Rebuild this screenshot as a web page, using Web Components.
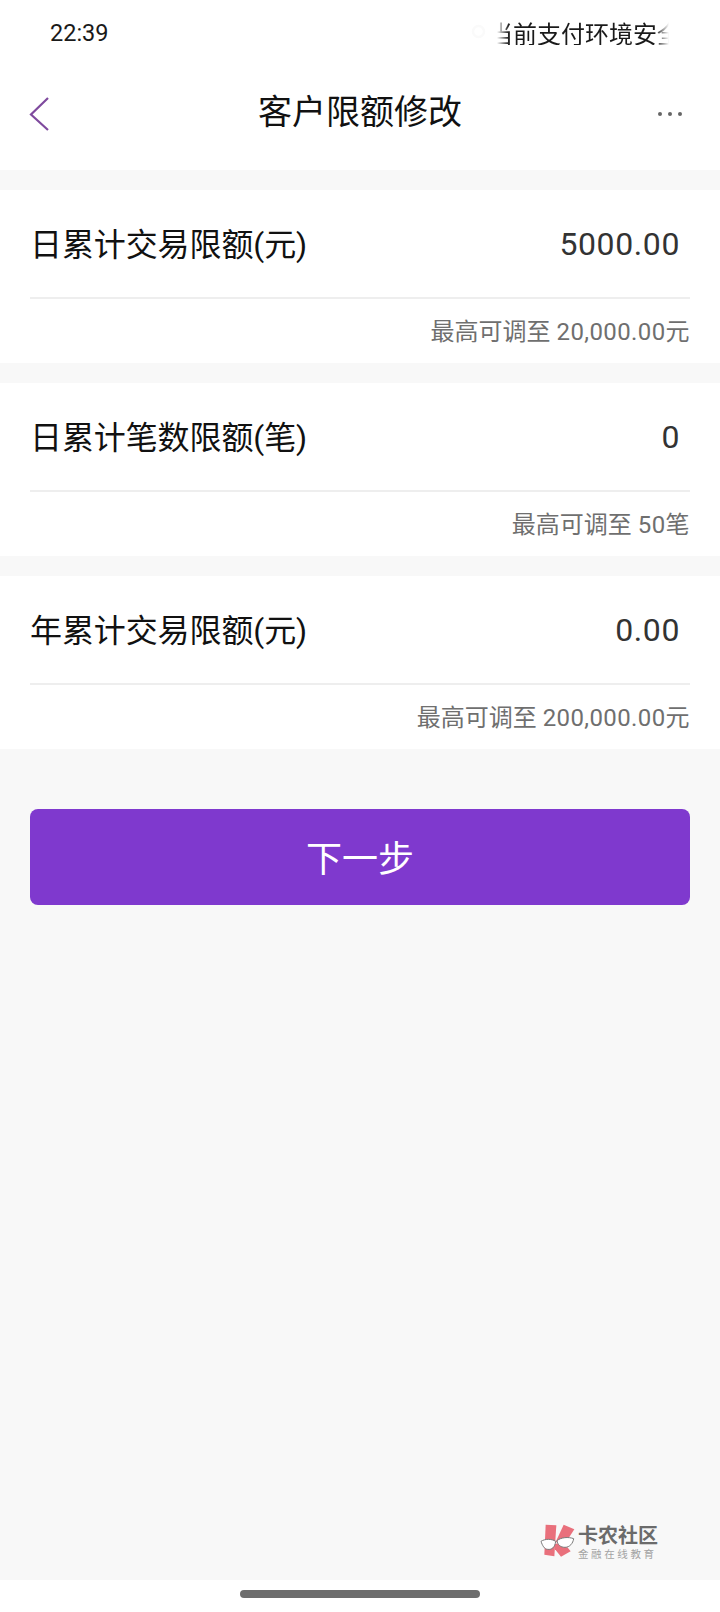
<!DOCTYPE html>
<html lang="zh">
<head>
<meta charset="utf-8">
<title>客户限额修改</title>
<style>
  html, body {
    margin: 0;
    padding: 0;
    height: 1612px;
    background: #f8f8f8;
    font-family: Roboto, "Noto Sans CJK SC", sans-serif;
  }
  body {
    display: flex;
    flex-direction: column;
    overflow: hidden;
  }
</style>
</head>
<body>
  <status-bar time="22:39" notice="当前支付环境安全"></status-bar>
  <nav-header title-text="客户限额修改"></nav-header>
  <limit-card label="日累计交易限额(元)" value="5000.00" hint="最高可调至" cap="20,000.00元"></limit-card>
  <limit-card label="日累计笔数限额(笔)" value="0" hint="最高可调至" cap="50笔"></limit-card>
  <limit-card label="年累计交易限额(元)" value="0.00" hint="最高可调至" cap="200,000.00元"></limit-card>
  <primary-button>下一步</primary-button>
  <brand-mark></brand-mark>
  <home-indicator></home-indicator>

<script>
class StatusBar extends HTMLElement {
  connectedCallback() {
    this.attachShadow({ mode: 'open' });
    this.shadowRoot.innerHTML = `
      <style>
        :host {
          display: flex;
          align-items: center;
          justify-content: space-between;
          height: 66px;
          background: #fff;
          padding: 0 39px 0 50px;
          color: #1a1a1a;
        }
        .time {
          margin-top: 1px;
          font: 400 23.5px/1 Roboto, sans-serif;
        }
        .right {
          display: flex;
          align-items: center;
          gap: 3px;
        }
        .notice {
          margin-top: -1px;
          width: 192px;
          white-space: nowrap;
          font: 400 24px/1 "Noto Sans CJK SC", sans-serif;
          -webkit-mask-image: linear-gradient(to right, transparent 8px, #000 20px, #000 166px, transparent 180px);
          mask-image: linear-gradient(to right, transparent 8px, #000 20px, #000 166px, transparent 180px);
        }
        svg { display: block; margin-top: -4px; }
      </style>
      <span class="time">${this.getAttribute('time')}</span>
      <div class="right">
        <svg width="15" height="15" viewBox="0 0 15 15">
          <circle cx="7.5" cy="7.5" r="5.5" fill="none" stroke="#fafafa" stroke-width="2.5"/>
        </svg>
        <span class="notice">${this.getAttribute('notice')}</span>
      </div>
    `;
  }
}

class NavHeader extends HTMLElement {
  connectedCallback() {
    this.attachShadow({ mode: 'open' });
    this.shadowRoot.innerHTML = `
      <style>
        :host {
          display: grid;
          grid-template-columns: 100px 1fr 100px;
          align-items: center;
          height: 104px;
          margin-bottom: 20px;
          background: #fff;
          padding-bottom: 12px;
          box-sizing: border-box;
        }
        svg { display: block; }
        .back { margin: 4px 0 0 28px; }
        h1 {
          margin: -4px 0 0;
          text-align: center;
          font: 400 34px/1 "Noto Sans CJK SC", sans-serif;
          color: #111;
        }
        .more {
          justify-self: end;
          margin: 4px 38px 0 0;
          display: flex;
          gap: 6px;
        }
        .more i {
          width: 4px;
          height: 4px;
          border-radius: 50%;
          background: #666;
        }
      </style>
      <svg class="back" width="24" height="36" viewBox="0 0 24 36">
        <path d="M20 2 L3 18.5 L20 34" fill="none" stroke="#7f4a9e" stroke-width="2.2"/>
      </svg>
      <h1>${this.getAttribute('title-text')}</h1>
      <div class="more"><i></i><i></i><i></i></div>
    `;
  }
}

class LimitCard extends HTMLElement {
  connectedCallback() {
    this.attachShadow({ mode: 'open' });
    this.shadowRoot.innerHTML = `
      <style>
        :host {
          display: block;
          background: #fff;
          margin-bottom: 20px;
          padding: 0 30px;
        }
        :host(:last-of-type) { margin-bottom: 0; }
        .row {
          display: flex;
          align-items: center;
          justify-content: space-between;
          height: 105px;
          padding-top: 2px;
          border-bottom: 2px solid #eeeeee;
          padding-right: 10px;
        }
        .label {
          font: 400 32px/1 Roboto, "Noto Sans CJK SC", sans-serif;
          letter-spacing: -0.1px;
          color: #111;
        }
        .value {
          margin-top: -2px;
          font: 400 32px/1 Roboto, sans-serif;
          letter-spacing: 0.6px;
          color: #333;
        }
        .hint {
          display: flex;
          align-items: center;
          justify-content: flex-end;
          gap: 6px;
          height: 64px;
          box-sizing: border-box;
          padding-top: 2px;
          font: 400 24px/1 Roboto, "Noto Sans CJK SC", sans-serif;
          color: #6f6f6f;
        }
        .cap { letter-spacing: 0.4px; }
      </style>
      <div class="row">
        <span class="label">${this.getAttribute('label')}</span>
        <span class="value">${this.getAttribute('value')}</span>
      </div>
      <div class="hint">
        <span>${this.getAttribute('hint')}</span>
        <span class="cap">${this.getAttribute('cap')}</span>
      </div>
    `;
  }
}

class PrimaryButton extends HTMLElement {
  connectedCallback() {
    this.attachShadow({ mode: 'open' });
    this.shadowRoot.innerHTML = `
      <style>
        :host {
          display: block;
          padding: 60px 30px 0;
        }
        button {
          display: block;
          width: 100%;
          height: 96px;
          padding: 0 0 2px;
          border: none;
          border-radius: 8px;
          background: #7f39ce;
          color: #fff;
          font: 400 36px/1 "Noto Sans CJK SC", sans-serif;
        }
      </style>
      <button><slot></slot></button>
    `;
  }
}

class BrandMark extends HTMLElement {
  connectedCallback() {
    this.attachShadow({ mode: 'open' });
    this.shadowRoot.innerHTML = `
      <style>
        :host {
          display: flex;
          flex: 1;
          align-items: flex-end;
          justify-content: flex-end;
          padding: 0 62px 16px 0;
        }
        svg { display: block; }
        .words {
          display: flex;
          flex-direction: column;
          gap: 3px;
          margin-bottom: 5px;
        }
        .name {
          font: 700 20px/20px "Noto Sans CJK SC", sans-serif;
          color: #6b6b6b;
        }
        .sub {
          font: 400 10.5px/11px "Noto Sans CJK SC", sans-serif;
          letter-spacing: 2.6px;
          color: #a3a3a3;
          white-space: nowrap;
        }
      </style>
      <svg width="43" height="46" viewBox="0 0 129 138">
        <path d="M32 20 L64 22 L58 115 L28 110 Z" fill="#e9707c"/>
        <path d="M86 20 L118 34 L88 80 L62 72 Z" fill="#e9707c"/>
        <path d="M60 78 L84 72 L107 100 L78 116 L60 94 Z" fill="#e9707c"/>
        <path d="M18 70 C30 62 50 62 62 70 C60 88 50 96 38 94 C28 94 22 82 18 70 Z" fill="#fff" stroke="#7a7a7a" stroke-width="3"/>
        <path d="M66 68 C78 58 100 56 116 62 C114 76 104 88 90 88 C76 88 68 80 66 68 Z" fill="#fff" stroke="#7a7a7a" stroke-width="3"/>
      </svg>
      <div class="words">
        <span class="name">卡农社区</span>
        <span class="sub">金融在线教育</span>
      </div>
    `;
  }
}

class HomeIndicator extends HTMLElement {
  connectedCallback() {
    this.attachShadow({ mode: 'open' });
    this.shadowRoot.innerHTML = `
      <style>
        :host {
          display: flex;
          justify-content: center;
          height: 32px;
          padding-top: 10px;
          box-sizing: border-box;
          background: #fff;
        }
        div {
          width: 240px;
          height: 8px;
          border-radius: 4px;
          background: #6d6d6d;
        }
      </style>
      <div></div>
    `;
  }
}

customElements.define('status-bar', StatusBar);
customElements.define('nav-header', NavHeader);
customElements.define('limit-card', LimitCard);
customElements.define('primary-button', PrimaryButton);
customElements.define('brand-mark', BrandMark);
customElements.define('home-indicator', HomeIndicator);
</script>
</body>
</html>
